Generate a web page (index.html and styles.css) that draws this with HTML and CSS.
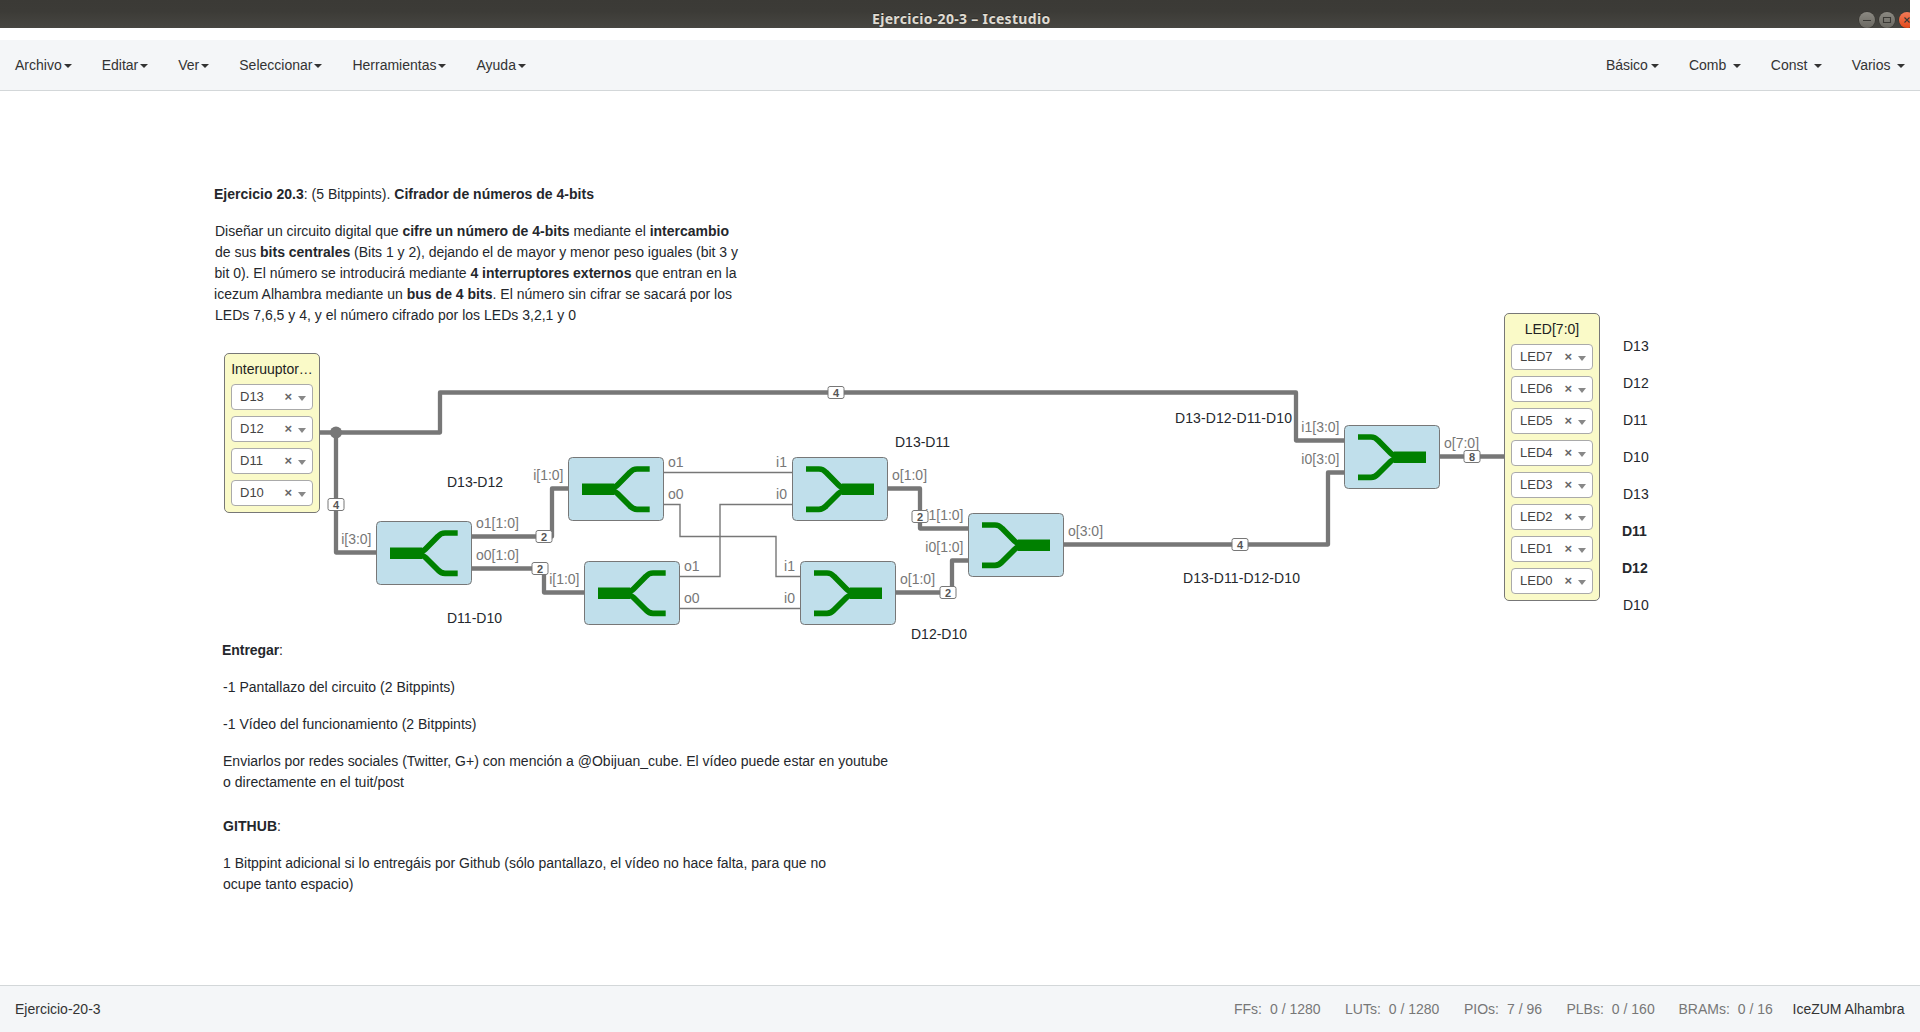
FILE: index.html
```html
<!DOCTYPE html>
<html lang="es">
<head>
<meta charset="utf-8">
<title>Ejercicio-20-3 – Icestudio</title>
<link rel="stylesheet" href="styles.css">
</head>
<body>
<header class="titlebar">
  <h1 class="window-title">Ejercicio-20-3 – Icestudio</h1>
  <div class="window-buttons">
    <svg class="wbtn" viewBox="0 0 16 16"><path d="M4 8.5h8"/></svg>
    <svg class="wbtn" viewBox="0 0 16 16"><path d="M4.5 5.5h7v5h-7z"/></svg>
    <svg class="wbtn wbtn-close" viewBox="0 0 16 16"><path d="M5.5 5.5l5 5m0-5l-5 5"/></svg>
  </div>
</header>

<nav class="navbar">
  <div class="menu">
    <a class="menu-item">Archivo<i class="caret"></i></a>
    <a class="menu-item">Editar<i class="caret"></i></a>
    <a class="menu-item">Ver<i class="caret"></i></a>
    <a class="menu-item">Seleccionar<i class="caret"></i></a>
    <a class="menu-item">Herramientas<i class="caret"></i></a>
    <a class="menu-item">Ayuda<i class="caret"></i></a>
  </div>
  <div class="menu">
    <a class="menu-item">Básico<i class="caret"></i></a>
    <a class="menu-item spaced">Comb<i class="caret"></i></a>
    <a class="menu-item spaced">Const<i class="caret"></i></a>
    <a class="menu-item spaced">Varios<i class="caret"></i></a>
  </div>
</nav>

<main class="canvas">
  <svg class="diagram" viewBox="0 91 1920 894">
    <defs>
      <g id="split">
        <rect class="block" x=".5" y=".5" width="95" height="63" rx="4"/>
        <path class="arm" d="M44 30.500Q47 30.500 49.500 28L62 15.300Q65 12 69 12H81.700M44 34Q47 34 49.500 36.500L62 49Q65 52.300 69 52.300H81.700"/>
        <path class="stem" d="M14 26.500h32l1 5.750l-1 5.750H14z"/>
      </g>
      <g id="join">
        <rect class="block" x=".5" y=".5" width="95" height="63" rx="4"/>
        <path class="arm" d="M52 30.500Q49 30.500 46.500 28L34 15.300Q31 12 27 12H14M52 34Q49 34 46.500 36.500L34 49Q31 52.300 27 52.300H14"/>
        <path class="stem" d="M82 26.500H50l-1 5.750l1 5.750H82z"/>
      </g>
      <rect id="tag" class="tag" x="-8" y="-6" width="16" height="12" rx="2"/>
    </defs>

    <g class="bus">
      <path d="M320 432.500H440V392.500H1296V440.500H1344"/>
      <path d="M336 432.500V552.500H376"/>
      <path d="M472 536.500H552V488.500H568"/>
      <path d="M472 568.500H544V592.500H584"/>
      <path d="M888 488.500H920V528.500H968"/>
      <path d="M896 592.500H952V560.500H968"/>
      <path d="M1064 544.500H1328V472.500H1344"/>
      <path d="M1440 456.500H1504"/>
    </g>
    <circle class="junction" cx="336" cy="432.500" r="6"/>
    <g class="wire">
      <path d="M664 472.500H792"/>
      <path d="M664 504.500H680V536.500H776V576.500H800"/>
      <path d="M680 576.500H720V504.500H792"/>
      <path d="M680 608.500H800"/>
    </g>

    <use href="#split" x="376" y="521"/>
    <use href="#split" x="568" y="457"/>
    <use href="#split" x="584" y="561"/>
    <use href="#join" x="792" y="457"/>
    <use href="#join" x="800" y="561"/>
    <use href="#join" x="968" y="513"/>
    <use href="#join" x="1344" y="425"/>

    <g class="port">
      <text x="476" y="528">o1[1:0]</text>
      <text x="476" y="560">o0[1:0]</text>
      <text x="668" y="467">o1</text>
      <text x="668" y="499">o0</text>
      <text x="684" y="571">o1</text>
      <text x="684" y="603">o0</text>
      <text x="892" y="480">o[1:0]</text>
      <text x="900" y="584">o[1:0]</text>
      <text x="1068" y="536">o[3:0]</text>
      <text x="1444" y="448">o[7:0]</text>
    </g>
    <g class="port port-in">
      <text x="371.500" y="544">i[3:0]</text>
      <text x="563.500" y="480">i[1:0]</text>
      <text x="579.500" y="584">i[1:0]</text>
      <text x="787" y="467">i1</text>
      <text x="787" y="499">i0</text>
      <text x="795" y="571">i1</text>
      <text x="795" y="603">i0</text>
      <text x="963.500" y="520">i1[1:0]</text>
      <text x="963.500" y="552">i0[1:0]</text>
      <text x="1339.500" y="432">i1[3:0]</text>
      <text x="1339.500" y="464">i0[3:0]</text>
    </g>

    <g class="size">
      <use href="#tag" x="836" y="392.500"/><text x="836" y="396.500">4</text>
      <use href="#tag" x="336" y="504.500"/><text x="336" y="508.500">4</text>
      <use href="#tag" x="544" y="536.500"/><text x="544" y="540.500">2</text>
      <use href="#tag" x="540" y="568.500"/><text x="540" y="572.500">2</text>
      <use href="#tag" x="920" y="516.500"/><text x="920" y="520.500">2</text>
      <use href="#tag" x="948" y="592.500"/><text x="948" y="596.500">2</text>
      <use href="#tag" x="1240" y="544.500"/><text x="1240" y="548.500">4</text>
      <use href="#tag" x="1472" y="456.500"/><text x="1472" y="460.500">8</text>
    </g>

    <g class="note">
      <text x="447" y="487">D13-D12</text>
      <text x="447" y="623">D11-D10</text>
      <text x="895" y="447">D13-D11</text>
      <text x="911" y="639">D12-D10</text>
      <text x="1175" y="423" textLength="117">D13-D12-D11-D10</text>
      <text x="1183" y="583" textLength="117">D13-D11-D12-D10</text>
      <text x="1623" y="351">D13</text>
      <text x="1623" y="388">D12</text>
      <text x="1623" y="425">D11</text>
      <text x="1623" y="462">D10</text>
      <text x="1623" y="499">D13</text>
      <text class="strong" x="1622" y="536">D11</text>
      <text class="strong" x="1622" y="573">D12</text>
      <text x="1623" y="610">D10</text>
    </g>

    <g class="note">
      <text x="214" y="199" textLength="380"><tspan class="strong">Ejercicio 20.3</tspan>: (5 Bitppints). <tspan class="strong">Cifrador de números de 4-bits</tspan></text>
      <text x="215" y="236" textLength="514">Diseñar un circuito digital que <tspan class="strong">cifre un número de 4-bits</tspan> mediante el <tspan class="strong">intercambio</tspan></text>
      <text x="215" y="257" textLength="523">de sus <tspan class="strong">bits centrales</tspan> (Bits 1 y 2), dejando el de mayor y menor peso iguales (bit 3 y</text>
      <text x="214.500" y="278" textLength="522">bit 0). El número se introducirá mediante <tspan class="strong">4 interruptores externos</tspan> que entran en la</text>
      <text x="214" y="299" textLength="518">icezum Alhambra mediante un <tspan class="strong">bus de 4 bits</tspan>. El número sin cifrar se sacará por los</text>
      <text x="215" y="320" textLength="361">LEDs 7,6,5 y 4, y el número cifrado por los LEDs 3,2,1 y 0</text>
    </g>

    <g class="note">
      <text x="222" y="655" textLength="61"><tspan class="strong">Entregar</tspan>:</text>
      <text x="223" y="692" textLength="232">-1 Pantallazo del circuito (2 Bitppints)</text>
      <text x="223" y="729" textLength="253.500">-1 Vídeo del funcionamiento (2 Bitppints)</text>
      <text x="223" y="766" textLength="665">Enviarlos por redes sociales (Twitter, G+) con mención a @Obijuan_cube. El vídeo puede estar en youtube</text>
      <text x="223" y="787" textLength="181">o directamente en el tuit/post</text>
      <text x="223" y="831" textLength="58"><tspan class="strong">GITHUB</tspan>:</text>
      <text x="223" y="868" textLength="603">1 Bitppint adicional si lo entregáis por Github (sólo pantallazo, el vídeo no hace falta, para que no</text>
      <text x="223" y="889" textLength="130.500">ocupe tanto espacio)</text>
    </g>
  </svg>

  <section class="io io-input">
    <h2 class="io-title">Interuuptor…</h2>
    <div class="pin"><span>D13</span><b>×</b><i></i></div>
    <div class="pin"><span>D12</span><b>×</b><i></i></div>
    <div class="pin"><span>D11</span><b>×</b><i></i></div>
    <div class="pin"><span>D10</span><b>×</b><i></i></div>
  </section>

  <section class="io io-output">
    <h2 class="io-title">LED[7:0]</h2>
    <div class="pin"><span>LED7</span><b>×</b><i></i></div>
    <div class="pin"><span>LED6</span><b>×</b><i></i></div>
    <div class="pin"><span>LED5</span><b>×</b><i></i></div>
    <div class="pin"><span>LED4</span><b>×</b><i></i></div>
    <div class="pin"><span>LED3</span><b>×</b><i></i></div>
    <div class="pin"><span>LED2</span><b>×</b><i></i></div>
    <div class="pin"><span>LED1</span><b>×</b><i></i></div>
    <div class="pin"><span>LED0</span><b>×</b><i></i></div>
  </section>
</main>

<footer class="statusbar">
  <span class="project">Ejercicio-20-3</span>
  <div class="resources">
    <span class="res"><span>FFs:</span><span>0 / 1280</span></span>
    <span class="res"><span>LUTs:</span><span>0 / 1280</span></span>
    <span class="res"><span>PIOs:</span><span>7 / 96</span></span>
    <span class="res"><span>PLBs:</span><span>0 / 160</span></span>
    <span class="res"><span>BRAMs:</span><span>0 / 16</span></span>
    <span class="board">IceZUM Alhambra</span>
  </div>
</footer>
</body>
</html>
```
FILE: styles.css
```css
* { box-sizing: border-box; }

body {
  margin: 0;
  height: 1032px;
  display: flex;
  flex-direction: column;
  overflow: hidden;
  background: #fff;
  color: #333;
  font: 14px/20px "Liberation Sans", Arial, sans-serif;
}

/* Window frame */
.titlebar {
  flex: none;
  width: 1910px;
  height: 28px;
  margin-bottom: 12px;
  display: grid;
  grid-template-columns: 1859px 51px;
  overflow: hidden;
  background: linear-gradient(#3b3a36, #3c3b37 40%, #474641);
}
.window-title {
  margin: 0;
  padding: 9px 0 0 872px;
  color: #dfdbd2;
  font: bold 14px/20px "Noto Sans", "Open Sans", sans-serif;
  letter-spacing: .32px;
  text-shadow: 0 -1px 0 #2a2925;
  white-space: nowrap;
}
.window-buttons { display: flex; gap: 4px; padding-top: 12px; }
.wbtn {
  flex: none;
  width: 16px;
  height: 16px;
  border-radius: 50%;
  background: linear-gradient(#8b8982, #696760);
  box-shadow: 0 0 0 .5px #32312d;
}
.wbtn path { fill: none; stroke: #3a3935; stroke-width: 1.1; }
.wbtn-close { background: linear-gradient(#f37b58, #e2481a); }

/* Menu bar */
.navbar {
  flex: none;
  height: 51px;
  display: flex;
  justify-content: space-between;
  background: #f4f6f8;
  border-bottom: 1px solid #d3d7d9;
}
.menu { display: flex; }
.menu-item { display: flex; align-items: center; padding: 0 15px; white-space: nowrap; }
.caret {
  margin: 2px 0 0 2px;
  border-top: 4px solid #333;
  border-left: 4px solid transparent;
  border-right: 4px solid transparent;
}
.menu:last-child .caret { margin-left: 3px; }
.menu:last-child .spaced .caret { margin-left: 6.5px; }

/* Design canvas */
.canvas { flex: none; position: relative; height: 894px; }
.diagram { display: block; width: 1920px; height: 894px; }
.bus path { fill: none; stroke: #777; stroke-width: 4.3; stroke-linejoin: round; }
.wire path { fill: none; stroke: #777; stroke-width: 1.4; }
.junction { fill: #777; }
.block { fill: #c0dfeb; stroke: #777; }
.arm { fill: none; stroke: #008000; stroke-width: 5.700; }
.stem { fill: #008000; }
.port { fill: #777; }
.port-in { text-anchor: end; }
.note { fill: #24272c; }
.strong { font-weight: bold; }
.tag { fill: #fff; stroke: #777; }
.size text { fill: #555; font-size: 11px; font-weight: bold; text-anchor: middle; }

.io {
  position: absolute;
  width: 96px;
  padding: 5px 6px 0;
  display: flex;
  flex-direction: column;
  gap: 6px;
  background: #fafac8;
  border: 1px solid #777;
  border-radius: 5px;
}
.io-input { left: 224px; top: 262px; height: 160px; }
.io-output { left: 1504px; top: 222px; height: 288px; }
.io-title { margin: 0 0 -1px; font: 14px/20px "Liberation Sans", Arial, sans-serif; color: #222; text-align: center; white-space: nowrap; }
.pin {
  flex: none;
  height: 26px;
  padding: 0 6px 0 8px;
  display: flex;
  align-items: center;
  background: #fff;
  border: 1px solid #aaa;
  border-radius: 4px;
  color: #444;
  font-size: 13px;
  line-height: 24px;
}
.pin span { flex: 1; }
.pin b { width: 7px; margin-right: 6.5px; color: #666; font-size: 13px; }
.pin i {
  margin-top: 3px;
  border-top: 5px solid #888;
  border-left: 4px solid transparent;
  border-right: 4px solid transparent;
}

/* Status bar */
.statusbar {
  flex: none;
  height: 47px;
  padding: 0 0 0 15px;
  display: flex;
  justify-content: space-between;
  align-items: center;
  background: #f4f6f8;
  border-top: 1px solid #d3d7d9;
}
.resources {
  display: grid;
  grid-template-columns: 111px 119px 102.500px 112px 114px 127.500px;
  color: #777;
  white-space: nowrap;
}
.res { display: flex; gap: 8px; }
.board { color: #333; }
```
